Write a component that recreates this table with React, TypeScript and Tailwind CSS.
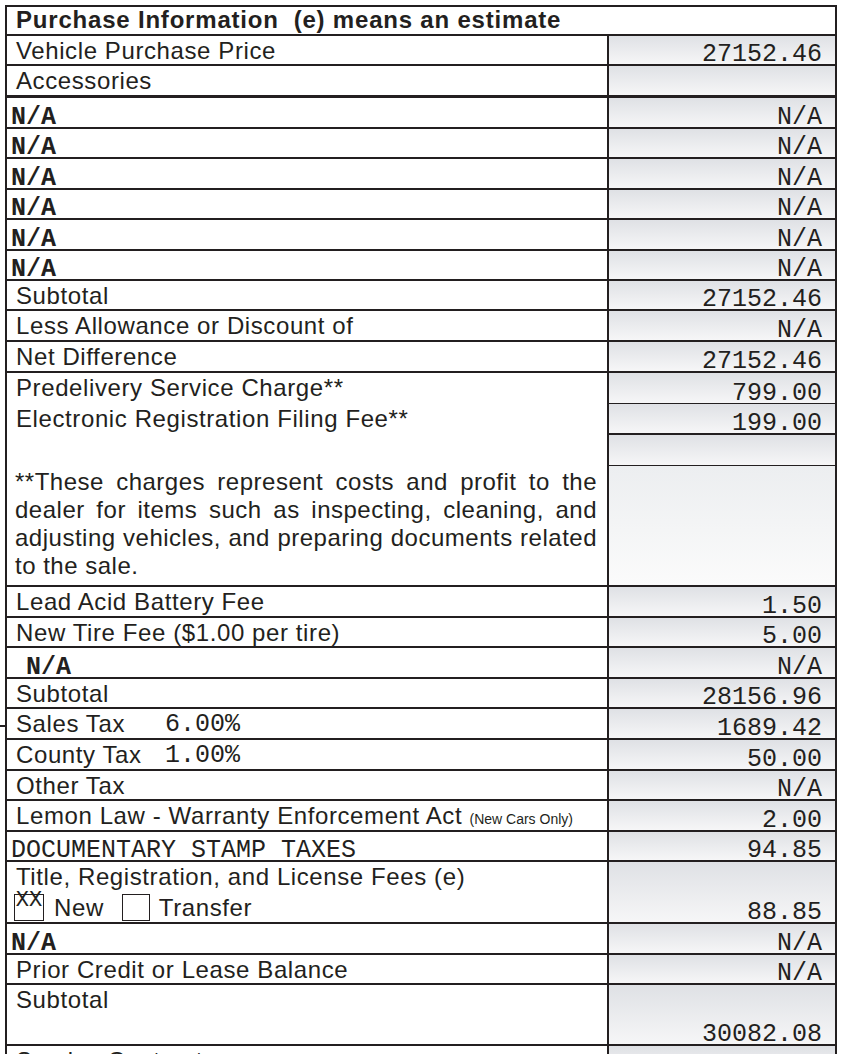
import React from "react";

const ink = "text-[#231f20]";
const label = "pl-[9px] pt-[3px] text-[24px] leading-[24px] tracking-[0.6px] font-['Liberation_Sans',Arial,sans-serif] whitespace-nowrap";
const mono = "font-['Liberation_Mono','Courier_New',monospace] text-[25px] leading-[16px]";
const cell = "w-[228px] shrink-0 border-l-2 border-[#231f20] bg-linear-to-b from-[#dfe1e5] to-[#f6f6f7] flex items-end justify-end pr-[13px] pb-[1px]";

function Row({ h, children, value, thick }: { h: string; children?: React.ReactNode; value?: string; thick?: boolean }) {
  return (
    <div className={`flex ${h} ${thick ? "border-b-[3px]" : "border-b-2"} border-[#231f20]`}>
      <div className="flex-1 min-w-0 flex">{children}</div>
      <div className={cell}>
        <span className={mono}>{value}</span>
      </div>
    </div>
  );
}

function Lbl({ text }: { text: React.ReactNode }) {
  return <div className={label}>{text}</div>;
}

function NA({ indent }: { indent?: boolean }) {
  return (
    <div className={`flex items-end pb-[1px] ${indent ? "pl-[19px]" : "pl-[4px]"}`}>
      <span className={`${mono} font-bold`}>N/A</span>
    </div>
  );
}

function Tax({ name, pct }: { name: string; pct: string }) {
  return (
    <div className="flex w-full">
      <div className={`${label} w-[158px] self-start`}>{name}</div>
      <div className="self-end pb-[1px]">
        <span className={mono}>{pct}</span>
      </div>
    </div>
  );
}

export default function App() {
  return (
    <div className={`bg-white w-[844px] min-h-[1054px] pt-[5px] pl-[5px] ${ink}`}>
      <div className="w-[832px] border-2 border-b-0 border-[#231f20] flex flex-col">
        {/* header */}
        <div className="h-[29px] border-b-2 border-[#231f20] pl-[9px] text-[24px] leading-[26px] tracking-[0.8px] font-bold font-['Liberation_Sans',Arial,sans-serif] whitespace-pre">
          Purchase Information  (e) means an estimate
        </div>
        <Row h="h-[30px]" value="27152.46"><Lbl text="Vehicle Purchase Price" /></Row>
        <Row h="h-[32px]" thick><Lbl text="Accessories" /></Row>
        <Row h="h-[31px]" value="N/A"><NA /></Row>
        <Row h="h-[30px]" value="N/A"><NA /></Row>
        <Row h="h-[31px]" value="N/A"><NA /></Row>
        <Row h="h-[30px]" value="N/A"><NA /></Row>
        <Row h="h-[31px]" value="N/A"><NA /></Row>
        <Row h="h-[30px]" value="N/A"><NA /></Row>
        <Row h="h-[30px]" value="27152.46"><Lbl text="Subtotal" /></Row>
        <Row h="h-[31px]" value="N/A"><Lbl text="Less Allowance or Discount of" /></Row>
        <Row h="h-[31px]" value="27152.46"><Lbl text="Net Difference" /></Row>

        {/* dealer fees + note */}
        <div className="flex h-[214px] border-b-2 border-[#231f20]">
          <div className="flex-1 min-w-0 flex flex-col">
            <div className="h-[31px]"><Lbl text="Predelivery Service Charge**" /></div>
            <div className="h-[31px]"><Lbl text="Electronic Registration Filing Fee**" /></div>
            <div className="flex-1" />
            <p className="pl-[8px] pr-[10px] pb-[5px] text-justify text-[24px] leading-[28px] tracking-[0.5px] font-['Liberation_Sans',Arial,sans-serif]">
              **These charges represent costs and profit to the dealer for items such as inspecting, cleaning, and adjusting vehicles, and preparing documents related to the sale.
            </p>
          </div>
          <div className="w-[228px] shrink-0 border-l-2 border-[#231f20] flex flex-col">
            <div className="h-[31px] border-b border-[#231f20] bg-linear-to-b from-[#dfe1e5] to-[#f6f6f7] flex items-end justify-end pr-[13px] pb-[1px]">
              <span className={mono}>799.00</span>
            </div>
            <div className="h-[31px] border-b-2 border-[#231f20] bg-linear-to-b from-[#dfe1e5] to-[#f6f6f7] flex items-end justify-end pr-[13px] pb-[1px]">
              <span className={mono}>199.00</span>
            </div>
            <div className="h-[31px] border-b border-[#231f20] bg-linear-to-b from-[#dfe1e5] to-[#f6f6f7]" />
            <div className="flex-1 bg-linear-to-b from-[#eceef0] to-[#fbfbfb]" />
          </div>
        </div>

        <Row h="h-[31px]" value="1.50"><Lbl text="Lead Acid Battery Fee" /></Row>
        <Row h="h-[30px]" value="5.00"><Lbl text="New Tire Fee ($1.00 per tire)" /></Row>
        <Row h="h-[31px]" value="N/A"><NA indent /></Row>
        <Row h="h-[30px]" value="28156.96"><Lbl text="Subtotal" /></Row>
        <div className="relative">
          <span className="absolute -left-[7px] top-[16px] w-[7px] h-[2px] bg-[#231f20]" />
          <Row h="h-[31px]" value="1689.42"><Tax name="Sales Tax" pct="6.00%" /></Row>
        </div>
        <Row h="h-[31px]" value="50.00"><Tax name="County Tax" pct="1.00%" /></Row>
        <Row h="h-[30px]" value="N/A"><Lbl text="Other Tax" /></Row>
        <Row h="h-[31px]" value="2.00">
          <Lbl
            text={
              <>
                Lemon Law - Warranty Enforcement Act <span className="text-[14px] tracking-normal">(New Cars Only)</span>
              </>
            }
          />
        </Row>
        <Row h="h-[30px]" value="94.85">
          <div className="flex items-end pb-[1px] pl-[4px]">
            <span className={`${mono} whitespace-pre`}>DOCUMENTARY STAMP TAXES</span>
          </div>
        </Row>
        <Row h="h-[62px]" value="88.85">
          <div className="flex flex-col">
            <Lbl text="Title, Registration, and License Fees (e)" />
            <div className="flex items-center pl-[7px] mt-[5px] text-[24px] leading-[24px] tracking-[0.6px] font-['Liberation_Sans',Arial,sans-serif]">
              <span className="w-[30px] h-[27px] border-[1.5px] border-[#231f20] flex justify-center">
                <span className="font-['Liberation_Mono','Courier_New',monospace] text-[22px] leading-[18px] -mt-[3px] tracking-normal">XX</span>
              </span>
              <span className="ml-[10px]">New</span>
              <span className="ml-[18px] w-[28px] h-[27px] border-[1.5px] border-[#231f20]" />
              <span className="ml-[9px]">Transfer</span>
            </div>
          </div>
        </Row>
        <Row h="h-[31px]" value="N/A"><NA /></Row>
        <Row h="h-[30px]" value="N/A"><Lbl text="Prior Credit or Lease Balance" /></Row>
        <Row h="h-[61px]" value="30082.08"><Lbl text="Subtotal" /></Row>
        <Row h="h-[31px]"><Lbl text="Service Contract" /></Row>
      </div>
    </div>
  );
}
